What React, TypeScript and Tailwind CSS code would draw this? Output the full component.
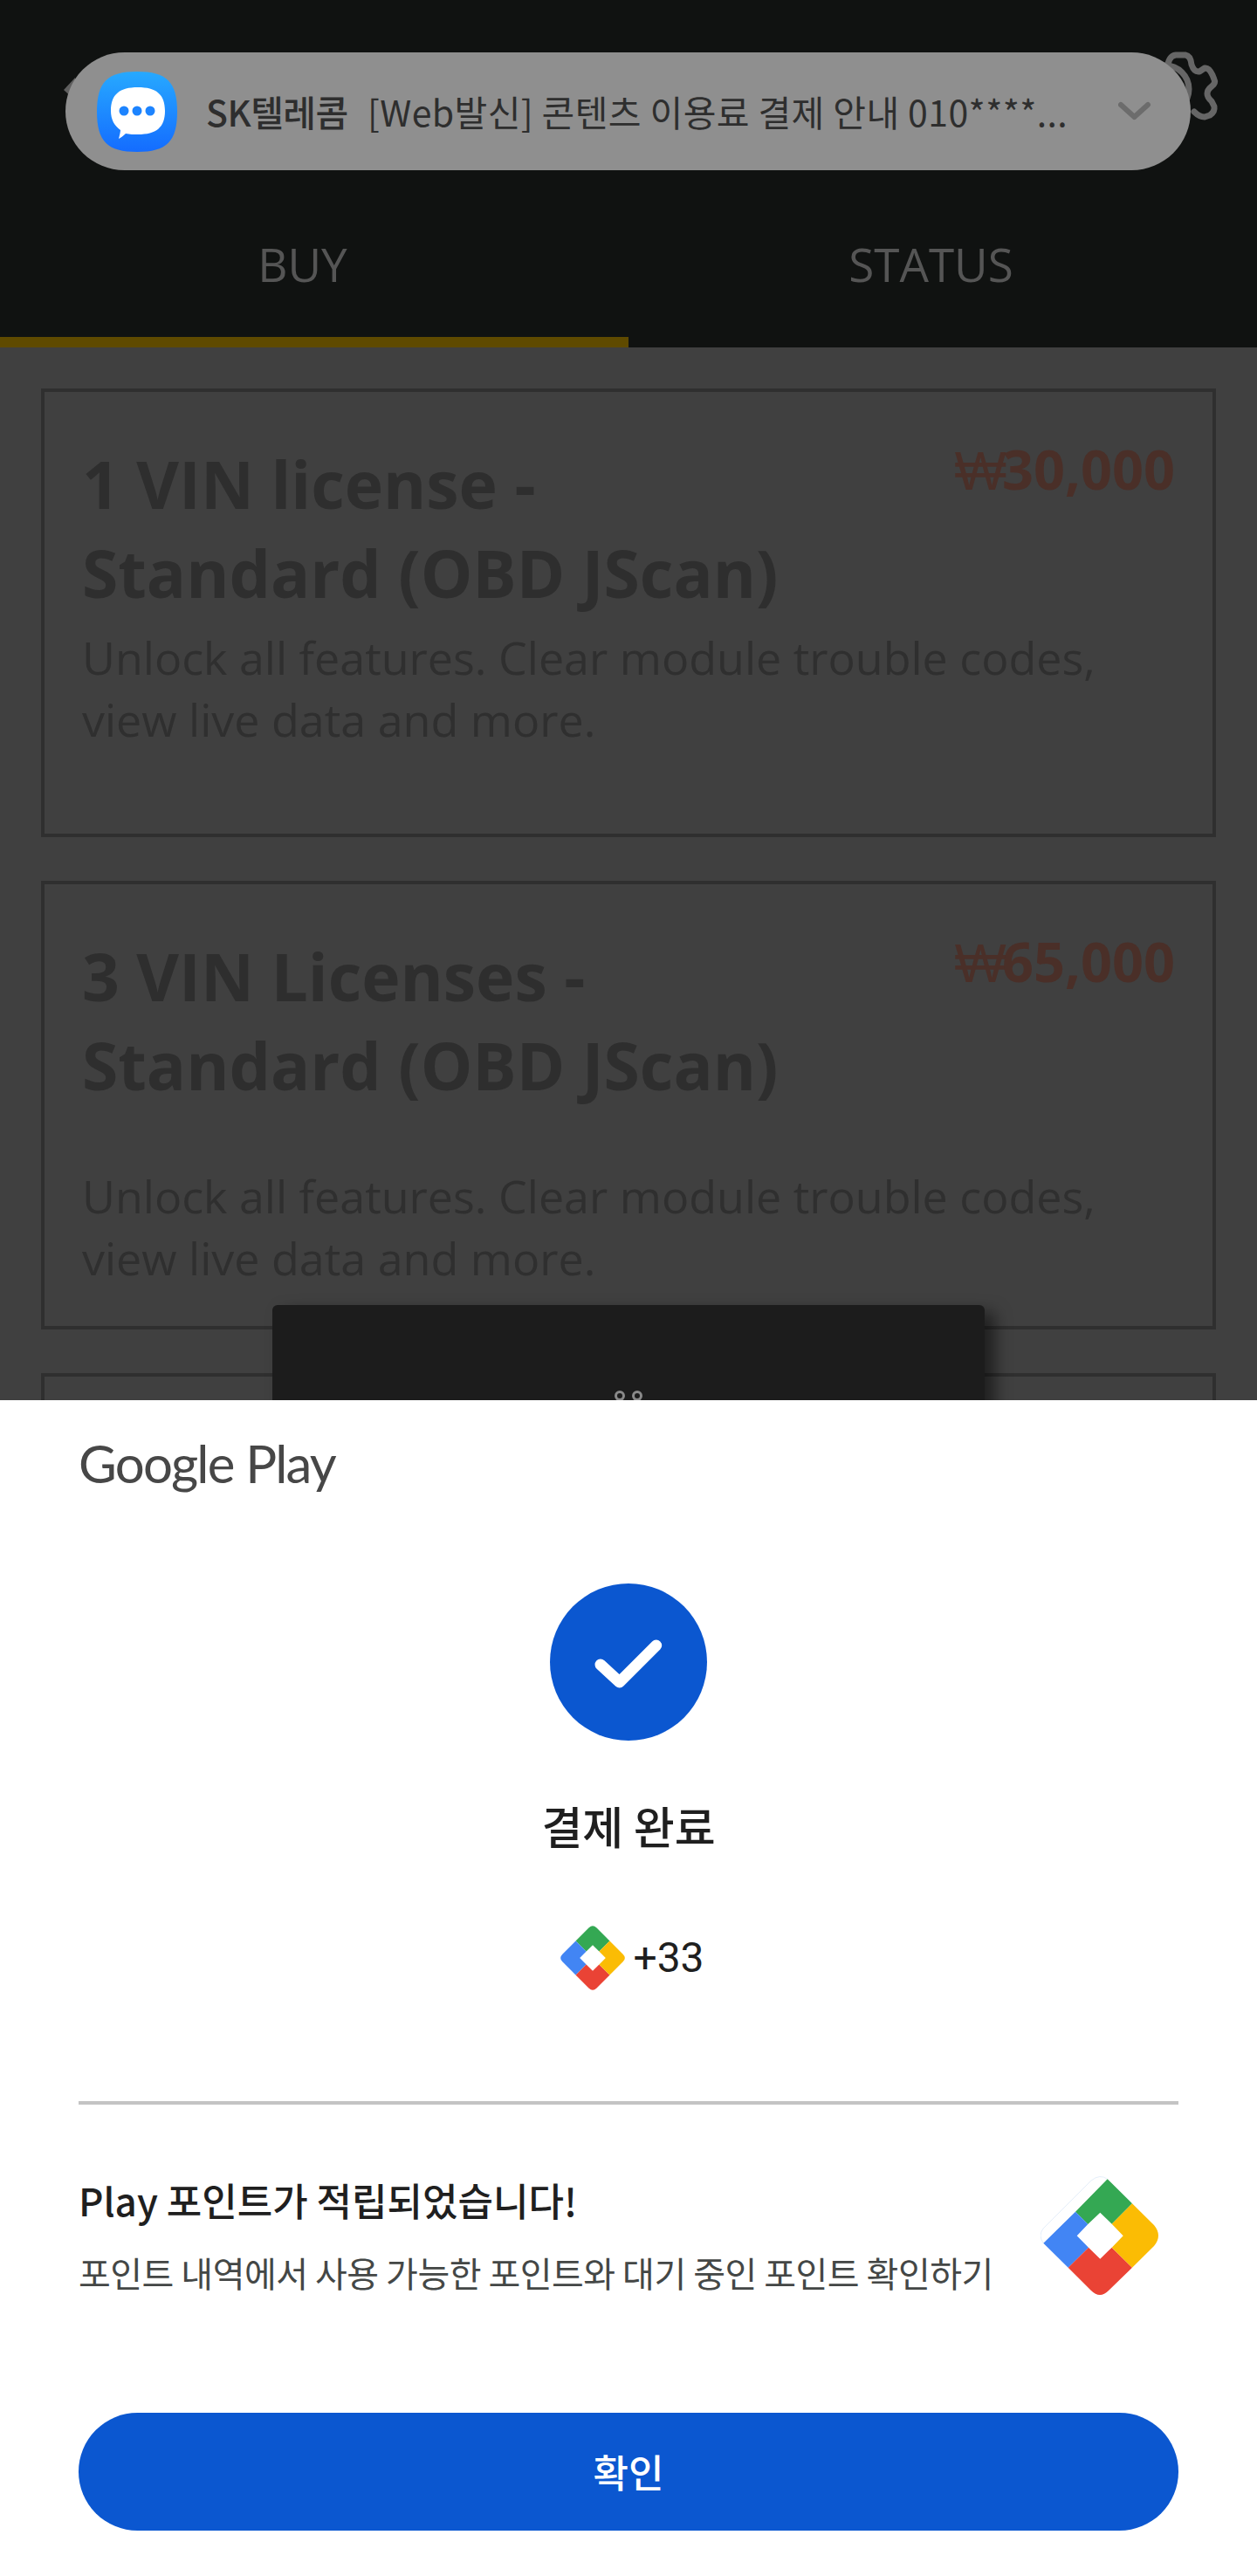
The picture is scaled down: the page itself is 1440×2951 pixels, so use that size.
const CJK = "font-['Noto_Sans_CJK_KR','Noto_Sans',sans-serif]";

// Squircle app icon for the messaging app
function MessagesIcon() {
  return (
    <svg width="92" height="92" viewBox="0 0 92 92" className="shrink-0">
      <defs>
        <linearGradient id="msg" x1="0" y1="0" x2="0" y2="1">
          <stop offset="0" stopColor="#27a9ff" />
          <stop offset="1" stopColor="#146cff" />
        </linearGradient>
      </defs>
      <path d="M46 0C80 0 92 12 92 46C92 80 80 92 46 92C12 92 0 80 0 46C0 12 12 0 46 0Z" fill="url(#msg)" />
      <path d="M47 18C68 18 78 26 78 45C78 64 68 72 47 72C42 72 38 72 33 71C30 74 27 76 25 77C26 73 27 69 27 67C20 62 16 55 16 45C16 26 26 18 47 18Z" fill="#fff" />
      <circle cx="31" cy="45" r="5.5" fill="#1d84ff" />
      <circle cx="46" cy="45" r="5.5" fill="#1d84ff" />
      <circle cx="61" cy="45" r="5.5" fill="#1d84ff" />
    </svg>
  );
}

// Heads-up message notification
function Notification() {
  return (
    <div className="absolute left-[75px] top-[60px] flex h-[135px] w-[1289px] items-center rounded-full bg-[#8f8f8f] pl-[36px]">
      <MessagesIcon />
      <span className={`${CJK} ml-[33px] w-[164px] whitespace-nowrap text-[41px] font-medium leading-none tracking-[-0.5px] text-[#2e2e2e]`}>SK텔레콤</span>
      <span className={`${CJK} ml-[21px] w-[800px] whitespace-nowrap text-[41px] leading-none tracking-[0.4px] text-[#2e2e2e]`}>
        [Web발신] 콘텐츠 이용료 결제 안내 010****...
      </span>
      <svg width="40" height="28" viewBox="0 0 40 28" className="ml-[60px] mt-[2px]" fill="none">
        <path d="M3 5L18.5 19L34 5" stroke="#6c6c6c" strokeWidth="6" strokeLinecap="round" strokeLinejoin="round" />
      </svg>
    </div>
  );
}

// Settings gear of the app bar, mostly covered by the notification
function HeaderGear() {
  return (
    <svg width="80" height="95" viewBox="0 0 80 95" fill="none" className="absolute left-[1320px] top-[50px]">
      <circle cx="15" cy="52" r="27" stroke="#666666" strokeWidth="7" />
      <path
        d="M17 30Q18 14 27 13L38 13Q44 14 45 24Q48 33 54 32L60 28Q65 27 69 36L71 41Q73 45 68 49Q58 57 68 66L71 72Q72 78 66 82L60 84Q54 84 48 78"
        stroke="#666666"
        strokeWidth="7"
        strokeLinecap="round"
        strokeLinejoin="round"
      />
    </svg>
  );
}

function Tab({ label, active }: { label: string; active?: boolean }) {
  return (
    <div className={`flex h-[134px] items-start justify-center pr-[27px] pt-[4px] ${active ? "border-b-[12px] border-[#5f4a00]" : ""}`}>
      <span className="font-['Open_Sans',sans-serif] text-[53px] leading-[70px] text-[#555555]">{label}</span>
    </div>
  );
}

type CardProps = { title: string[]; price: string; gap: string };

function LicenseCard({ title, price, gap }: CardProps) {
  return (
    <div className="h-[514px] border-[4px] border-[#2f2f2f] px-[43px] pt-[54px] font-['Open_Sans',sans-serif]">
      <div className="flex items-start justify-between">
        <h2 className="text-[75px] font-bold leading-[102px] text-[#2e2e2e]">
          {title[0]}
          <br />
          {title[1]}
        </h2>
        <span className="-mt-[9px] text-[63px] font-bold leading-[86px] text-[#4a2f28]">
          <span className="font-normal tracking-[-5px]">₩</span>
          {price}
        </span>
      </div>
      <p className={`${gap} text-[52px] leading-[71px] text-[#2f2f2f]`}>
        Unlock all features. Clear module trouble codes,
        <br />
        view live data and more.
      </p>
    </div>
  );
}

// Play Points mark, four coloured quadrants around a white centre
function PointsSmall() {
  return (
    <svg width="78" height="78" viewBox="0 0 100 100" className="shrink-0">
      <path d="M25 25L44.5 5.5Q50 0 55.5 5.5L75 25L59.5 40.5L50 31L40.5 40.5Z" fill="#34a853" />
      <path d="M25 25L40.5 40.5L31 50L40.5 59.5L25 75L5.5 55.5Q0 50 5.5 44.5Z" fill="#4285f4" />
      <path d="M40.5 59.5L50 69L59.5 59.5L75 75L55.5 94.5Q50 100 44.5 94.5L25 75Z" fill="#ea4335" />
      <path d="M75 25L94.5 44.5Q100 50 94.5 55.5L75 75L59.5 59.5L69 50L59.5 40.5Z" fill="#fbbc04" />
    </svg>
  );
}

// Larger mark whose upper-left edge is inset, leaving a pale outline
function PointsLarge() {
  return (
    <svg width="136" height="137" viewBox="0 0 136 137" className="shrink-0">
      <path d="M3.3 76.7Q-3 68 3 60L58 5Q68 -3 76.7 3.3" fill="none" stroke="#d3e2f5" strokeWidth="0.6" />
      <path d="M76.7 3.3L105 31.3L81.7 54.7L68.3 41.7L54.3 55L40 40.7Z" fill="#34a853" />
      <path d="M40 40.7L54.3 55L41.7 68.3L55 81.7L31.7 104.7L3.3 76.7Z" fill="#4285f4" />
      <path d="M55 81.7L68.3 94.7L81.7 81.7L105 104.7L78 131Q68 141 58 131L31.7 104.7Z" fill="#ea4335" />
      <path d="M105 31.3L130 56Q140 68 130 80L105 104.7L81.7 81.7L94.7 68.3L81.7 54.7Z" fill="#fbbc04" />
    </svg>
  );
}

export default function App() {
  return (
    <div className="relative flex w-[1440px] flex-col overflow-hidden bg-white">
      {/* App behind the dimmed payment sheet */}
      <div className="relative h-[1604px] overflow-hidden bg-[#404040]">
        <header className="flex h-[398px] flex-col justify-end bg-[#101211]">
          <div className="grid grid-cols-2">
            <Tab label="BUY" active />
            <Tab label="STATUS" />
          </div>
        </header>

        <div className="flex flex-col gap-[50px] px-[47px] pt-[47px]">
          <LicenseCard title={["1 VIN license -", "Standard (OBD JScan)"]} price="30,000" gap="mt-[10px]" />
          <LicenseCard title={["3 VIN Licenses -", "Standard (OBD JScan)"]} price="65,000" gap="mt-[63px]" />
          <div className="h-[514px] border-[4px] border-[#2f2f2f]" />
        </div>

        {/* Gear and back arrow peeking out from under the notification */}
        <HeaderGear />
        <svg width="16" height="28" viewBox="0 0 16 28" className="absolute left-[72px] top-[88px]">
          <path d="M1 15L14 1V27Z" fill="#5f5f5f" />
        </svg>
        <Notification />

        {/* Loading toast */}
        <div className="absolute left-[312px] top-[1495px] flex h-[200px] w-[816px] justify-center gap-[8px] rounded-[6px] bg-[#1c1c1c] pt-[98px] shadow-[12px_8px_18px_rgba(0,0,0,0.5)]">
          <span className="h-[12px] w-[12px] rounded-full border-[3px] border-[#8a8a8a]" />
          <span className="h-[12px] w-[12px] rounded-full border-[3px] border-[#8a8a8a]" />
        </div>
      </div>

      {/* Google Play payment result sheet */}
      <section className={`relative flex h-[1347px] flex-col bg-white px-[90px] ${CJK}`}>
        <div className="mt-[32px] h-[80px] font-['Lato',sans-serif] text-[60px] leading-[80px] tracking-[-1.8px] text-[#474747]">
          Google Play
        </div>

        <div className="mt-[98px] flex flex-col items-center">
          <div className="flex h-[180px] w-[180px] items-center justify-center rounded-full bg-[#0b57d0]">
            <svg width="180" height="180" viewBox="0 0 180 180" fill="none">
              <path d="M58 93L79.7 113L121.7 71" stroke="#fff" strokeWidth="13" strokeLinecap="round" strokeLinejoin="round" />
            </svg>
          </div>
          <h1 className="mt-[61px] text-[51px] font-medium leading-[72px] text-[#1f1f1f]">결제 완료</h1>
          <div className="ml-[7px] mt-[77px] flex items-center gap-[7px]">
            <PointsSmall />
            <span className="font-['Roboto',sans-serif] text-[48px] leading-[78px] text-[#1f1f1f]">+33</span>
          </div>
        </div>

        <div className="mt-[125px] h-[4px] bg-[#c4c4c4]" />

        <div className="mt-[82px] flex items-start justify-between">
          <div className="-mt-[3px]">
            <h3 className="text-[44px] font-medium leading-[60px] tracking-[0px] text-[#1f1f1f]">Play 포인트가 적립되었습니다!</h3>
            <p className="mt-[28px] text-[40px] leading-[50px] tracking-[-0.5px] text-[#444746]">
              포인트 내역에서 사용 가능한 포인트와 대기 중인 포인트 확인하기
            </p>
          </div>
          <div className="mr-[22px] shrink-0">
            <PointsLarge />
          </div>
        </div>

        <button className="mt-[134px] flex h-[135px] items-center justify-center rounded-full bg-[#0b57d0] pb-[2px] text-[44px] font-medium text-white">
          확인
        </button>
      </section>
    </div>
  );
}
